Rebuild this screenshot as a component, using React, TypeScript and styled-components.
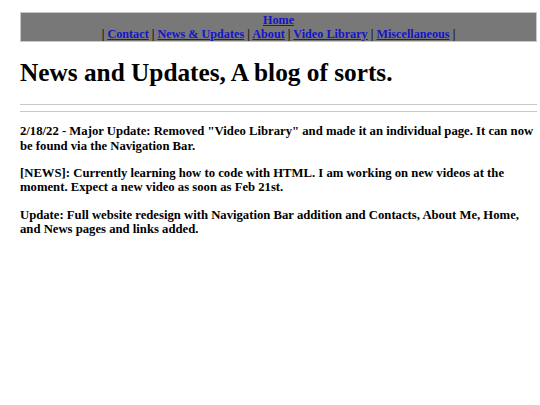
import React from "react";
import styled, { createGlobalStyle } from "styled-components";

const Global = createGlobalStyle`
  html, body { margin: 0; padding: 0; background: #ffffff; }
  body {
    font-family: "Liberation Serif", "Times New Roman", serif;
    font-size: 12.5px;
    color: #000000;
  }
`;

const Page = styled.div`
  padding: 12px 3px 0 20px;
`;

const NavBar = styled.nav`
  background: #787878;
  border: 1px solid #c8c8c8;
  text-align: center;
  font-weight: bold;
  font-size: 12.2px;
  line-height: 14px;
`;

const NavLine = styled.div`
  color: #111111;
`;

const NavLink = styled.a`
  color: #1414c8;
  text-decoration: underline;
`;

const Title = styled.h1`
  font-size: 25.3px;
  font-weight: bold;
  margin: 16px 0 16.5px;
  line-height: 29px;
`;

const Rule = styled.hr`
  border: none;
  border-top: 1px solid #c8c8c8;
  height: 0;
  margin: 6px 0;
`;

const Post = styled.p`
  font-weight: bold;
  font-size: 12.7px;
  margin: 12.3px 0;
  line-height: 14.8px;
`;

const links = ["Contact", "News & Updates", "About", "Video Library", "Miscellaneous"];

export default function App() {
  return (
    <>
      <Global />
      <Page>
        <NavBar>
          <NavLine>
            <NavLink href="#">Home</NavLink>
          </NavLine>
          <NavLine>
            {"| "}
            {links.map((l) => (
              <React.Fragment key={l}>
                <NavLink href="#">{l}</NavLink>
                {" | "}
              </React.Fragment>
            ))}
          </NavLine>
        </NavBar>
        <Title>News and Updates, A blog of sorts.</Title>
        <Rule />
        <Rule />
        <Post>
          2/18/22 - Major Update: Removed "Video Library" and made it an individual page. It can now be
          found via the Navigation Bar.
        </Post>
        <Post>
          [NEWS]: Currently learning how to code with HTML. I am working on new videos at the moment.
          Expect a new video as soon as Feb 21st.
        </Post>
        <Post>
          Update: Full website redesign with Navigation Bar addition and Contacts, About Me, Home, and
          News pages and links added.
        </Post>
      </Page>
    </>
  );
}
